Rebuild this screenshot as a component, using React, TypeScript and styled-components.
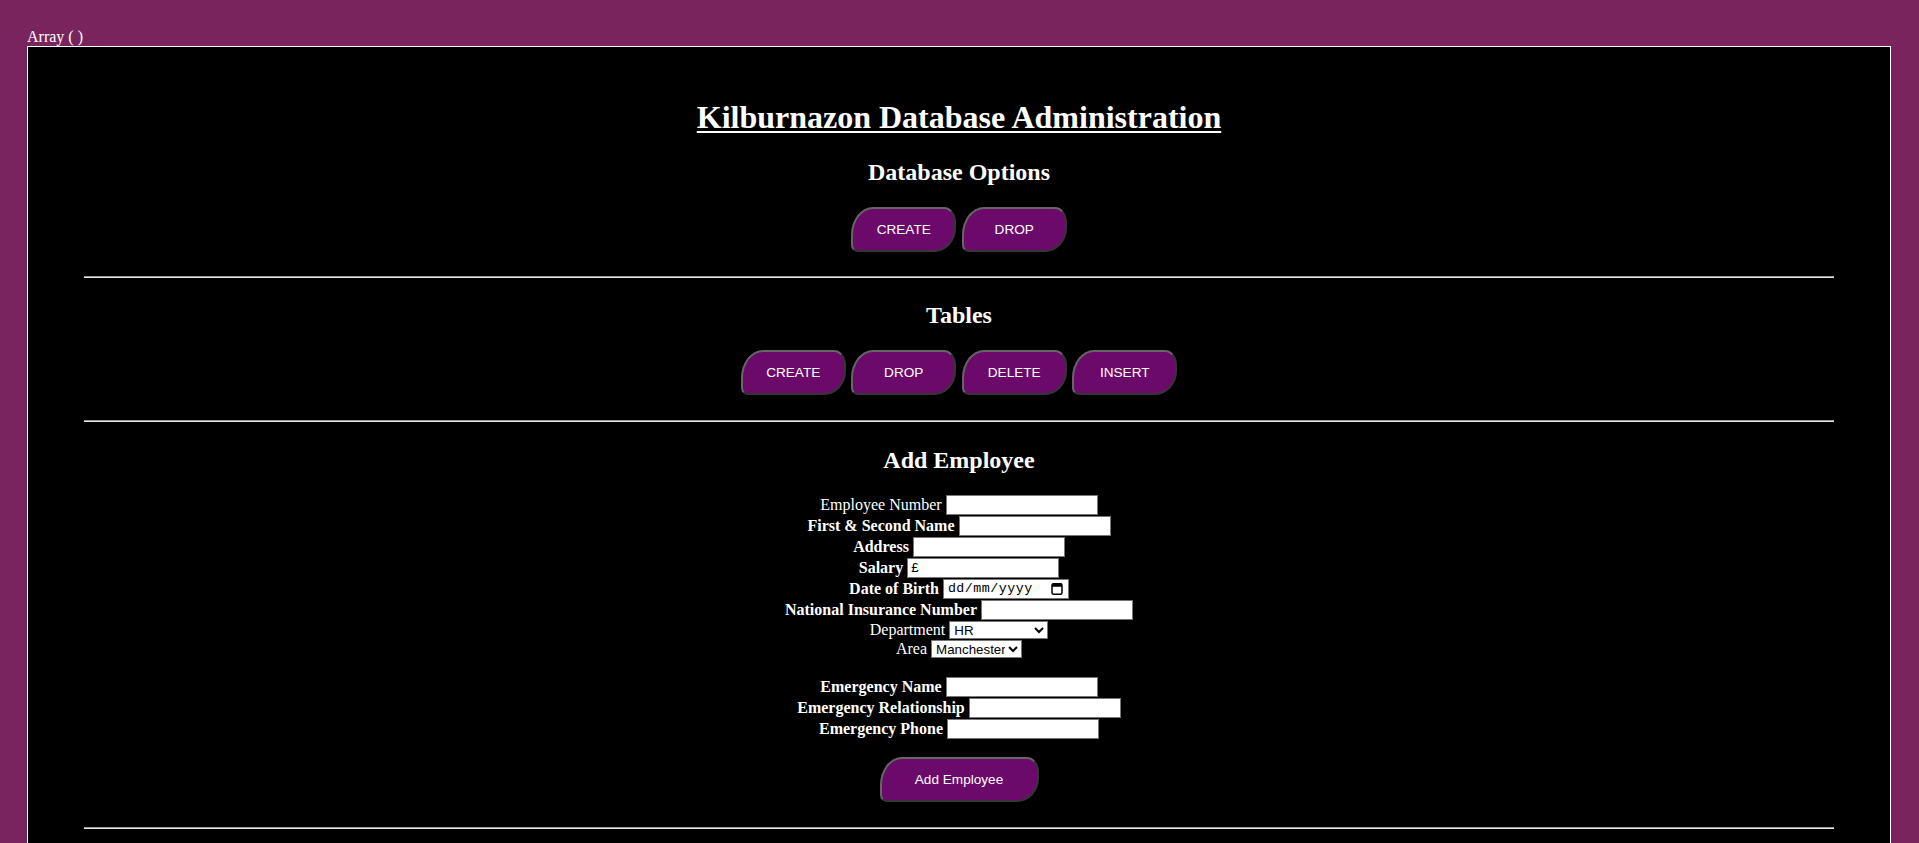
import React from "react";
import styled, { createGlobalStyle } from "styled-components";

const GlobalStyle = createGlobalStyle`
  html {
    scrollbar-width: none;
    background: #7a245e;
  }
  html::-webkit-scrollbar { display: none; }
  body {
    margin: 0;
    padding: 28px 28px 0 27px;
    background: #7a245e;
    color: #ffffff;
    font-family: "Liberation Serif", "Times New Roman", serif;
    font-size: 16px;
  }
`;

const Debug = styled.div`
  line-height: 18px;
  height: 18px;
`;

const Panel = styled.main`
  background: #000000;
  border: 1px solid #ffffff;
  padding: 0 56px 80px;
  text-align: center;
`;

const Title = styled.h1`
  margin: 52px 0 0;
  font-size: 32px;
  line-height: 37px;
  font-weight: bold;
  text-decoration: underline;
  text-decoration-thickness: 2px;
  text-underline-offset: 3px;
`;

const SectionTitle = styled.h2<{ $top: number }>`
  margin: ${(p) => p.$top}px 0 0;
  font-size: 24px;
  line-height: 28px;
  font-weight: bold;
`;

const ButtonRow = styled.div`
  margin-top: 21px;
  display: flex;
  justify-content: center;
  gap: 5.5px;
`;

const PillButton = styled.button<{ $width: number }>`
  width: ${(p) => p.$width}px;
  height: 45px;
  box-sizing: border-box;
  padding: 0;
  background: #6c0a6c;
  color: #ffffff;
  font-family: "Liberation Sans", Arial, sans-serif;
  font-size: 13.6px;
  border: 2px solid;
  border-color: #666666 #353535 #353535 #666666;
  border-radius: 22px 12px 22px 7px / 28px 15px 24px 7px;
  cursor: pointer;
`;

const Rule = styled.hr<{ $top: number }>`
  margin: ${(p) => p.$top}px 0 0;
  height: 0;
  border: 0;
  border-top: 1px solid #9a9a9a;
  border-bottom: 1px solid #e6e6e6;
`;

const Form = styled.form`
  margin-top: 20px;
  display: flex;
  flex-direction: column;
  align-items: center;
`;

const Row = styled.div<{ $height: number }>`
  height: ${(p) => p.$height}px;
  display: flex;
  justify-content: center;
  align-items: center;
  gap: 4px;
`;

const Spacer = styled.div`
  height: 18px;
`;

const Label = styled.label<{ $bold?: boolean }>`
  font-weight: ${(p) => (p.$bold ? "bold" : "normal")};
  line-height: 18px;
  white-space: nowrap;
`;

const TextInput = styled.input`
  box-sizing: border-box;
  width: 152px;
  height: 20px;
  margin: 0;
  padding: 1px 3px;
  border: 1px solid #767676;
  background: #ffffff;
  color: #000000;
  font-family: "Liberation Sans", Arial, sans-serif;
  font-size: 13.333px;
`;

const DateField = styled.div`
  box-sizing: border-box;
  width: 126px;
  height: 20px;
  display: flex;
  align-items: center;
  padding: 0 5px 0 4px;
  border: 1px solid #767676;
  background: #ffffff;
`;

const DateText = styled.input`
  flex: 1;
  min-width: 0;
  border: 0;
  padding: 0;
  margin: 0;
  background: transparent;
  font-family: "Liberation Mono", "DejaVu Sans Mono", monospace;
  font-size: 13.333px;
  letter-spacing: 0.5px;
  color: #000000;
  outline: none;
  &::placeholder {
    color: #000000;
    opacity: 1;
  }
`;

const Select = styled.select<{ $width: number }>`
  box-sizing: border-box;
  width: ${(p) => p.$width}px;
  height: 18px;
  margin: 0;
  font-family: "Liberation Sans", Arial, sans-serif;
  font-size: 13.333px;
  color: #000000;
  background: #ffffff;
`;

const SubmitWrap = styled.div`
  margin-top: 18px;
  display: flex;
  justify-content: center;
`;

const CalendarIcon = () => (
  <svg width="12" height="13" viewBox="0 0 12 13" aria-hidden="true">
    <rect x="1" y="1.75" width="10" height="10.5" rx="1.5" fill="none" stroke="#000" strokeWidth="1.5" />
    <rect x="1" y="1.75" width="10" height="3" fill="#000" />
  </svg>
);

export default function App() {
  return (
    <>
      <GlobalStyle />
      <Debug>Array ( )</Debug>
      <Panel>
        <Title>Kilburnazon Database Administration</Title>

        <SectionTitle $top={22}>Database Options</SectionTitle>
        <ButtonRow>
          <PillButton $width={105}>CREATE</PillButton>
          <PillButton $width={105}>DROP</PillButton>
        </ButtonRow>
        <Rule $top={24} />

        <SectionTitle $top={23}>Tables</SectionTitle>
        <ButtonRow>
          <PillButton $width={105}>CREATE</PillButton>
          <PillButton $width={105}>DROP</PillButton>
          <PillButton $width={105}>DELETE</PillButton>
          <PillButton $width={105}>INSERT</PillButton>
        </ButtonRow>
        <Rule $top={25} />

        <SectionTitle $top={24}>Add Employee</SectionTitle>
        <Form onSubmit={(e) => e.preventDefault()}>
          <Row $height={21}>
            <Label>Employee Number</Label>
            <TextInput type="text" />
          </Row>
          <Row $height={21}>
            <Label $bold>First &amp; Second Name</Label>
            <TextInput type="text" />
          </Row>
          <Row $height={21}>
            <Label $bold>Address</Label>
            <TextInput type="text" />
          </Row>
          <Row $height={21}>
            <Label $bold>Salary</Label>
            <TextInput type="text" defaultValue="£" />
          </Row>
          <Row $height={21}>
            <Label $bold>Date of Birth</Label>
            <DateField>
              <DateText type="text" placeholder="dd/mm/yyyy" />
              <CalendarIcon />
            </DateField>
          </Row>
          <Row $height={21}>
            <Label $bold>National Insurance Number</Label>
            <TextInput type="text" />
          </Row>
          <Row $height={19}>
            <Label>Department</Label>
            <Select $width={99} defaultValue="HR">
              <option>HR</option>
              <option>Customer Service</option>
              <option>Packaging</option>
            </Select>
          </Row>
          <Row $height={19}>
            <Label>Area</Label>
            <Select $width={91} defaultValue="Manchester">
              <option>Manchester</option>
              <option>London</option>
              <option>Liverpool</option>
            </Select>
          </Row>
          <Spacer />
          <Row $height={21}>
            <Label $bold>Emergency Name</Label>
            <TextInput type="text" />
          </Row>
          <Row $height={21}>
            <Label $bold>Emergency Relationship</Label>
            <TextInput type="text" />
          </Row>
          <Row $height={21}>
            <Label $bold>Emergency Phone</Label>
            <TextInput type="text" />
          </Row>
          <SubmitWrap>
            <PillButton $width={159} type="submit">Add Employee</PillButton>
          </SubmitWrap>
        </Form>
        <Rule $top={25} />
      </Panel>
    </>
  );
}
